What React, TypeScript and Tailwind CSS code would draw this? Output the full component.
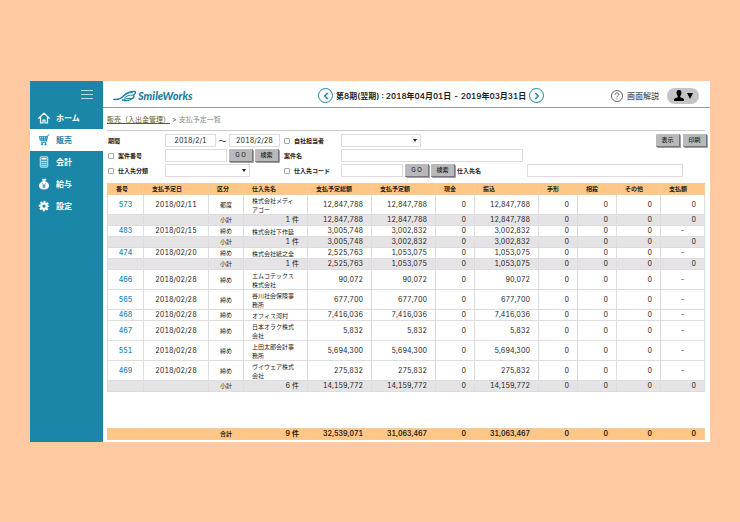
import { useState } from "react";
import type { ReactNode } from "react";
import { ChevronLeft, ChevronRight } from "lucide-react";
import clsx from "clsx";

interface Row {
  no: string;
  date: string;
  kind: string;
  name: string;
  total: string;
  amount: string;
  transfer: string;
  paid: string;
  subtotal?: boolean;
}

const columns = [
  { label: "番号", width: "w-[36px]" },
  { label: "支払予定日", width: "w-[65px]" },
  { label: "区分", width: "w-[35px]" },
  { label: "仕入先名", width: "w-[64px]" },
  { label: "支払予定総額", width: "w-[64px]" },
  { label: "支払予定額", width: "w-[64px]" },
  { label: "現金", width: "w-[39px]" },
  { label: "振込", width: "w-[64px]" },
  { label: "手形", width: "w-[39px]" },
  { label: "相殺", width: "w-[39px]" },
  { label: "その他", width: "w-[44px]" },
  { label: "支払額", width: "w-[44px]" },
];

const item = (no: string, date: string, kind: string, name: string, total: string, amount: string, paid = "-"): Row => ({
  no, date, kind, name, total, amount, transfer: amount, paid,
});

const subtotal = (count: string, total: string, amount: string): Row => ({
  no: "", date: "", kind: "小計", name: count, total, amount, transfer: amount, paid: "0", subtotal: true,
});

const rows: Row[] = [
  item("573", "2018/02/11", "都度", "株式会社メディアゴー", "12,847,788", "12,847,788", "0"),
  subtotal("1 件", "12,847,788", "12,847,788"),
  item("483", "2018/02/15", "締め", "株式会社下作延", "3,005,748", "3,002,832"),
  subtotal("1 件", "3,005,748", "3,002,832"),
  item("474", "2018/02/20", "締め", "株式会社紙之全", "2,525,763", "1,053,075"),
  subtotal("1 件", "2,525,763", "1,053,075"),
  item("466", "2018/02/28", "締め", "エムコテックス株式会社", "90,072", "90,072"),
  item("565", "2018/02/28", "締め", "谷川社会保険事務所", "677,700", "677,700"),
  item("468", "2018/02/28", "締め", "オフィス河村", "7,416,036", "7,416,036"),
  item("467", "2018/02/28", "締め", "日本オラク株式会社", "5,832", "5,832"),
  item("551", "2018/02/28", "締め", "上田太郎会計事務所", "5,694,300", "5,694,300"),
  item("469", "2018/02/28", "締め", "ヴイウェア株式会社", "275,832", "275,832"),
  subtotal("6 件", "14,159,772", "14,159,772"),
];

function HomeIcon() {
  return (
    <svg viewBox="0 0 24 24" className="size-3" fill="none" stroke="currentColor" strokeWidth="2.4" strokeLinecap="round" strokeLinejoin="round">
      <path d="M1.5 12.5 12 2.5l10.5 10" />
      <path d="M5 11v11h5v-6h4v6h5V11" />
    </svg>
  );
}

function CartIcon() {
  return (
    <svg viewBox="0 0 24 24" className="size-3" fill="none" stroke="currentColor" strokeWidth="1.5">
      <path d="M23 2h-3l-4 15H6" />
      <path d="M2 5h17l-2.500 9H5.500z" fill="currentColor" fillOpacity=".35" />
      <path d="M7 5l1.500 9M11 5v9M15 5l-1 9M3 9.500h15" />
      <circle cx="8" cy="20.500" r="1.5" fill="currentColor" />
      <circle cx="15" cy="20.500" r="1.5" fill="currentColor" />
    </svg>
  );
}

function CalculatorIcon() {
  return (
    <svg viewBox="0 0 24 24" className="size-3" fill="none" stroke="currentColor" strokeWidth="1.5">
      <rect x="4.5" y="1.5" width="15" height="21" rx="1.5" fill="currentColor" fillOpacity=".2" />
      <path d="M7 5.5h10" strokeWidth="3" />
      <path d="M7 11h10M7 15h10M7 19h10" strokeWidth="2.2" strokeDasharray="2.4 1.4" />
    </svg>
  );
}

function MoneyBagIcon() {
  return (
    <svg viewBox="0 0 24 24" className="size-3">
      <path d="M8 1l3 1.5L14 1l3 1-2.5 4.5C19 8 22 11.5 22 15.5 22 20.5 18 23 12 23S2 20.5 2 15.5C2 11.5 5.500 8 9.500 6.500z" fill="currentColor" />
      <path d="M8.500 10.500 12 15l3.500-4.500M12 15v5M9 15.500h6M9 18h6" fill="none" stroke="#1b87a8" strokeWidth="1.5" />
    </svg>
  );
}

function GearIcon() {
  return (
    <svg viewBox="0 0 24 24" className="size-3" fill="none" stroke="currentColor">
      <circle cx="12" cy="12" r="5.5" strokeWidth="4.5" />
      <circle cx="12" cy="12" r="8.7" strokeWidth="3.6" strokeDasharray="3.833 3" strokeDashoffset="1.9" />
    </svg>
  );
}

const menu = [
  { label: "ホーム", icon: <HomeIcon /> },
  { label: "販売", icon: <CartIcon /> },
  { label: "会計", icon: <CalculatorIcon /> },
  { label: "給与", icon: <MoneyBagIcon /> },
  { label: "設定", icon: <GearIcon /> },
];

function Sidebar() {
  const [active, setActive] = useState("販売");

  return (
    <aside className="w-[73px] shrink-0 bg-[#1b87a8] text-white">
      <div className="flex h-[26px] items-center justify-end pr-[10px]">
        <button aria-label="メニュー" className="text-[#b4dbe6]">
          <svg viewBox="0 0 12 10" className="h-[10px] w-3" stroke="currentColor" strokeWidth="1">
            <path d="M0 1.5h12M0 5.500h12M0 9.500h12" />
          </svg>
        </button>
      </div>
      <nav>
        {menu.map((m) => (
          <a
            key={m.label}
            href="#"
            onClick={() => setActive(m.label)}
            className={clsx(
              "flex h-[22px] items-center gap-[6px] pl-2 text-[8px] font-bold",
              active === m.label && "bg-white text-[#1b87a8]"
            )}
          >
            {m.icon}
            {m.label}
          </a>
        ))}
      </nav>
    </aside>
  );
}

function Logo() {
  return (
    <a href="#" className="flex items-center gap-px text-[#1b80a3]">
      <svg viewBox="0 0 72 36" className="h-3 w-6" fill="none" stroke="currentColor" strokeWidth="4" strokeLinecap="round" strokeLinejoin="round">
        <path d="M2 28c12 2 22-2 29-10C39 8 50 4 66 4c3 5 0 9-5 11 4 4 1 9-5 11-3 5-16 8-28 4" />
        <path d="M60 15c-12 0-19 2-26 9M56 26c-8-1-14-1-22 2M58 7c-10 1-17 4-23 10" strokeWidth="3" />
      </svg>
      <span className="font-['Lato'] text-[11px] leading-3 font-black italic">SmileWorks</span>
    </a>
  );
}

const roundButton = "flex size-[15px] items-center justify-center rounded-full border border-[#1b87a8] text-[#1b87a8]";

function Header() {
  return (
    <header className="flex h-[27px] items-center border-b border-[#999] pt-[3px] pr-[11px] pl-[10px]">
      <div className="w-[205px] shrink-0">
        <Logo />
      </div>
      <div className="flex shrink-0 items-center gap-[3px] text-[8px] font-semibold whitespace-nowrap tabular-nums">
        <button aria-label="前期" className={roundButton}>
          <ChevronLeft className="size-[10px]" strokeWidth={4} />
        </button>
        <span>第8期(翌期) : 2018年04月01日 - 2019年03月31日</span>
        <button aria-label="翌期" className={roundButton}>
          <ChevronRight className="size-[10px]" strokeWidth={4} />
        </button>
      </div>
      <div className="flex flex-1 items-center justify-end gap-2">
        <a href="#" className="flex items-center gap-1 text-[8px] font-medium text-[#555]">
          <svg viewBox="0 0 24 24" className="size-3" fill="none" stroke="currentColor" strokeWidth="1.8">
            <circle cx="12" cy="12" r="11" />
            <path d="M8.500 9.500c0-5 7-4.500 7-.5 0 2.500-3.500 2.500-3.500 5.500M12 16.500v2" />
          </svg>
          画面解説
        </a>
        <button aria-label="ユーザー" className="flex h-4 w-8 items-center justify-center gap-[3px] rounded-full bg-[#c4c4c6] text-black">
          <svg viewBox="0 0 20 22" className="h-[11px] w-[10px]" fill="currentColor">
            <path d="M10 0c3.500 0 5 2.500 5 5.500S13.500 11 12.500 12v2.500c3 1 7 2 7.500 4.500v3H0v-3c.5-2.500 4.500-3.500 7.500-4.500V12C6.500 11 5 8.500 5 5.500S6.500 0 10 0z" />
          </svg>
          <svg viewBox="0 0 10 10" className="size-[6px]" fill="currentColor">
            <path d="M0 0h10L5 10z" />
          </svg>
        </button>
      </div>
    </header>
  );
}

function GrayButton({ children }: { children: ReactNode }) {
  return (
    <button className="h-[13px] w-6 shrink-0 rounded-[1px] border-r border-b border-[#77777a] bg-[#b9b9bc] text-[6px] leading-3 font-medium whitespace-nowrap text-[#222] shadow-[1px_1px_0_#a0a0a3]">
      {children}
    </button>
  );
}

function TextBox({ label, value, className }: { label: string; value?: string; className: string }) {
  return (
    <input
      aria-label={label}
      defaultValue={value}
      className={clsx("h-[13px] min-w-0 border border-[#dcdcdc] bg-white text-center text-[7px] tabular-nums", className)}
    />
  );
}

function Dropdown({ label, className }: { label: string; className: string }) {
  return (
    <div className={clsx("relative h-[13px]", className)}>
      <select aria-label={label} className="block size-full appearance-none border border-[#dcdcdc] bg-white text-[7px]">
        <option value=""></option>
      </select>
      <svg viewBox="0 0 4 3" className="pointer-events-none absolute top-[5px] right-1 h-[3px] w-1" fill="#222">
        <path d="M0 0h4L2 3z" />
      </svg>
    </div>
  );
}

function CheckLabel({ children }: { children: ReactNode }) {
  return (
    <label className="flex items-center gap-1 whitespace-nowrap">
      <input type="checkbox" className="size-[6px] shrink-0 appearance-none rounded-[1px] border border-[#a8a8a8] bg-white checked:bg-[#1b87a8]" />
      {children}
    </label>
  );
}

function Filters() {
  return (
    <form className="mt-[3px] grid grid-cols-[57px_119px_57px_1fr] items-center gap-y-[2px] pl-px text-[6px] font-bold">
      <span>期間</span>
      <div className="flex items-center font-normal">
        <TextBox label="開始日" value="2018/2/1" className="w-[51px]" />
        <span className="w-[13px] text-center text-[8px]">～</span>
        <TextBox label="終了日" value="2018/2/28" className="w-[51px]" />
      </div>
      <CheckLabel>自社担当者</CheckLabel>
      <div className="-mr-[2px] flex items-center justify-between">
        <Dropdown label="自社担当者" className="w-[80px]" />
        <div className="flex gap-[3px]">
          <GrayButton>表示</GrayButton>
          <GrayButton>印刷</GrayButton>
        </div>
      </div>

      <CheckLabel>案件番号</CheckLabel>
      <div className="flex gap-[2px]">
        <TextBox label="案件番号" className="w-[62px]" />
        <GrayButton>G O</GrayButton>
        <GrayButton>検索</GrayButton>
      </div>
      <span>案件名</span>
      <TextBox label="案件名" className="w-1/2" />

      <CheckLabel>仕入先分類</CheckLabel>
      <Dropdown label="仕入先分類" className="w-[85px]" />
      <CheckLabel>仕入先コード</CheckLabel>
      <div className="flex items-center gap-[2px] pr-[22px]">
        <TextBox label="仕入先コード" className="w-[62px]" />
        <GrayButton>G O</GrayButton>
        <GrayButton>検索</GrayButton>
        <span className="w-[68px] shrink-0">仕入先名</span>
        <TextBox label="仕入先名" className="flex-1" />
      </div>
    </form>
  );
}

function Columns() {
  return (
    <colgroup>
      {columns.map((c) => (
        <col key={c.label} className={c.width} />
      ))}
    </colgroup>
  );
}

const cell = "border border-[#dddddf] p-0";
const num = `${cell} pr-2 text-right`;
const goldCell = "border border-[#f0cb9c] p-0";

function PaymentTable() {
  return (
    <table className="w-full table-fixed border-collapse text-[7px] leading-[10px] tabular-nums">
      <Columns />
      <thead>
        <tr className="h-[11px] bg-[#ffc685] text-[6px]">
          {columns.map((c) => (
            <th key={c.label} className={`${goldCell} pl-2 text-left font-bold whitespace-nowrap`}>
              {c.label}
            </th>
          ))}
        </tr>
      </thead>
      <tbody>
        {rows.map((r, i) => (
          <tr key={i} className={clsx("h-[11px]", r.subtotal && "bg-[#e5e3e5]")}>
            <td className={`${cell} text-center font-medium text-[#1b87b8]`}>{r.no && <a href="#">{r.no}</a>}</td>
            <td className={`${cell} text-center`}>{r.date}</td>
            <td className={`${cell} text-center text-[6px]`}>{r.kind}</td>
            {r.subtotal ? (
              <td className={num}>{r.name}</td>
            ) : (
              <td className="border border-[#dddddf] pt-px pr-[10px] pb-0 pl-2 text-[6px] leading-[9px]">{r.name}</td>
            )}
            <td className={num}>{r.total}</td>
            <td className={num}>{r.amount}</td>
            <td className={num}>0</td>
            <td className={num}>{r.transfer}</td>
            <td className={num}>0</td>
            <td className={num}>0</td>
            <td className={num}>0</td>
            <td className={r.paid === "-" ? `${cell} text-center` : num}>{r.paid}</td>
          </tr>
        ))}
      </tbody>
    </table>
  );
}

function GrandTotal() {
  const totals = ["9 件", "32,539,071", "31,063,467", "0", "31,063,467", "0", "0", "0", "0"];

  return (
    <table className="mt-9 w-full table-fixed border-collapse text-[7px] leading-[10px] font-semibold tabular-nums">
      <Columns />
      <tbody>
        <tr className="h-[11px] bg-[#ffc685]">
          <td className={goldCell}></td>
          <td className={goldCell}></td>
          <td className={`${goldCell} text-center text-[6px]`}>合計</td>
          {totals.map((value, i) => (
            <td key={i} className={`${goldCell} pr-2 text-right`}>{value}</td>
          ))}
        </tr>
      </tbody>
    </table>
  );
}

export default function App() {
  return (
    <div className="min-h-screen bg-[#ffc9a1] px-[30px] py-[81px] font-['Inter','Noto_Sans_CJK_JP',sans-serif] text-[#1c1c1c]">
      <div className="flex bg-white">
        <Sidebar />
        <main className="min-w-0 flex-1">
          <Header />
          <div className="pr-[5px] pb-[2px] pl-1">
            <div className="flex h-[23px] items-center gap-[2px] border-b border-[#ccc] pt-[2px] text-[7px]">
              <a href="#" className="text-[#5c5c2c] underline">販売（入出金管理）</a>
              <span>&gt;</span>
              <span className="text-[#888]">支払予定一覧</span>
            </div>
            <Filters />
            <div className="mt-[6px]">
              <PaymentTable />
              <GrandTotal />
            </div>
          </div>
        </main>
      </div>
    </div>
  );
}
